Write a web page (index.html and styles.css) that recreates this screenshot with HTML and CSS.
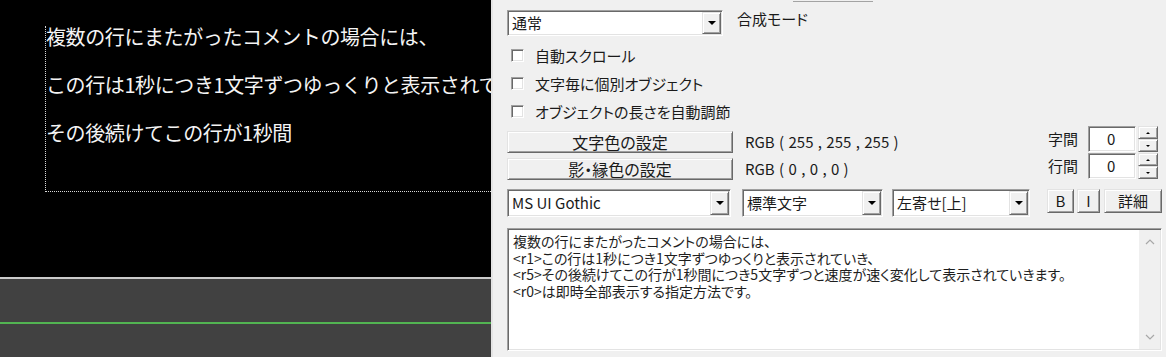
FILE: index.html
```html
<!DOCTYPE html>
<html lang="ja">
<head>
<meta charset="utf-8">
<title>テキスト</title>
<link rel="stylesheet" href="styles.css">
</head>
<body>
<div class="app">
  <div class="preview">
    <div class="canvas">
      <div class="textbox">
        <div class="line">複数の行にまたがったコメントの場合には、</div>
        <div class="line">この行は1秒につき1文字ずつゆっくりと表示されて</div>
        <div class="line">その後続けてこの行が1秒間</div>
      </div>
    </div>
    <div class="timeline"><div class="track"></div></div>
  </div>
  <div class="panel">
    <div class="stub-row"><div class="stub"></div></div>
    <div class="mode-row">
      <div class="combo mode"><div class="combo-text">通常</div><div class="combo-btn"><i class="tri"></i></div></div>
      <div class="mode-label">合成モード</div>
    </div>
    <div class="checks">
      <div class="check"><span class="cbox"></span><span class="clabel">自動スクロール</span></div>
      <div class="check"><span class="cbox"></span><span class="clabel">文字毎に個別オブジェクト</span></div>
      <div class="check"><span class="cbox"></span><span class="clabel">オブジェクトの長さを自動調節</span></div>
    </div>
    <div class="color-rows">
      <div class="color-row">
        <div class="btn">文字色の設定</div>
        <div class="rgb">RGB ( 255 , 255 , 255 )</div>
        <div class="spin">
          <div class="spin-label">字間</div>
          <div class="spin-input">0</div>
          <div class="spin-btns"><div class="spin-btn"><i class="tri-up"></i></div><div class="spin-btn"><i class="tri-down"></i></div></div>
        </div>
      </div>
      <div class="color-row">
        <div class="btn">影・縁色の設定</div>
        <div class="rgb">RGB ( 0 , 0 , 0 )</div>
        <div class="spin">
          <div class="spin-label">行間</div>
          <div class="spin-input">0</div>
          <div class="spin-btns"><div class="spin-btn"><i class="tri-up"></i></div><div class="spin-btn"><i class="tri-down"></i></div></div>
        </div>
      </div>
    </div>
    <div class="font-row">
      <div class="combo font"><div class="combo-text">MS UI Gothic</div><div class="combo-btn"><i class="tri"></i></div></div>
      <div class="combo style"><div class="combo-text">標準文字</div><div class="combo-btn"><i class="tri"></i></div></div>
      <div class="combo align"><div class="combo-text">左寄せ[上]</div><div class="combo-btn"><i class="tri"></i></div></div>
      <div class="tb tb-b">B</div>
      <div class="tb tb-i">I</div>
      <div class="tb tb-more">詳細</div>
    </div>
    <div class="memo">
      <div class="memo-text">複数の行にまたがったコメントの場合には、
&lt;r1&gt;この行は1秒につき1文字ずつゆっくりと表示されていき、
&lt;r5&gt;その後続けてこの行が1秒間につき5文字ずつと速度が速く変化して表示されていきます。
&lt;r0&gt;は即時全部表示する指定方法です。</div>
      <div class="scroll">
        <svg width="10" height="6" viewBox="0 0 10 6"><polyline points="1,5 5,1 9,5" fill="none" stroke="#a8a8a8" stroke-width="1.2"/></svg>
        <svg width="10" height="6" viewBox="0 0 10 6"><polyline points="1,1 5,5 9,1" fill="none" stroke="#a8a8a8" stroke-width="1.2"/></svg>
      </div>
    </div>
  </div>
</div>
</body>
</html>
```
FILE: styles.css
```css
html, body {
  margin: 0;
  padding: 0;
}
body {
  background: #f0f0f0;
  font-family: "Noto Sans CJK JP", "Noto Sans", sans-serif;
}
.app {
  display: flex;
  width: 1166px;
  height: 357px;
  overflow: hidden;
}

/* left preview */
.preview {
  width: 491px;
  flex: none;
  display: flex;
  flex-direction: column;
  overflow: hidden;
}
.canvas {
  height: 277px;
  flex: none;
  box-sizing: border-box;
  background: #000;
  padding: 26px 0 0 45px;
  overflow: hidden;
}
.textbox {
  width: 446px;
  height: 166px;
  box-sizing: border-box;
  border-left: 1px dotted #d8d8d8;
  border-bottom: 1px dotted #d8d8d8;
}
.line {
  height: 24px;
  line-height: 22px;
  margin-bottom: 24px;
  white-space: nowrap;
  color: #f4f4f4;
  font-size: 20px;
  letter-spacing: -0.4px;
}
.timeline {
  flex: 1;
  background: #414141;
  border-top: 2px solid #cbcbcb;
  padding-top: 43px;
}
.track {
  height: 2px;
  background: #52b452;
}

/* right panel */
.panel {
  flex: 1;
  border-left: 2px solid #e4e4e4;
  padding: 0 4px 0 14px;
  display: flex;
  flex-direction: column;
  font-size: 15px;
  color: #1a1a1a;
  font-feature-settings: "palt";
}
.stub-row {
  height: 3px;
  display: flex;
}
.stub {
  margin-left: 286px;
  width: 80px;
  height: 1px;
  border-bottom: 1px solid #a3a3a3;
}

.combo,
.cbox,
.spin-input,
.memo {
  box-sizing: border-box;
  background: #fff;
  border-top: 1px solid #a0a0a0;
  border-left: 1px solid #a0a0a0;
  border-bottom: 1px solid #fff;
  border-right: 1px solid #fff;
  box-shadow: inset 1px 1px 0 #696969, inset -1px -1px 0 #e3e3e3;
}
.combo-btn,
.btn,
.spin-btn,
.tb {
  box-sizing: border-box;
  background: #f0f0f0;
  border-top: 1px solid #e3e3e3;
  border-left: 1px solid #e3e3e3;
  border-right: 1px solid #696969;
  border-bottom: 1px solid #696969;
  box-shadow: inset 1px 1px 0 #fff, inset -1px -1px 0 #a0a0a0;
}

.mode-row {
  display: flex;
  align-items: flex-start;
  margin-top: 7px;
}
.combo {
  display: flex;
  height: 26px;
  padding: 1px;
}
.combo.mode { width: 216px; }
.combo-text {
  flex: 1;
  padding-left: 3px;
  line-height: 22px;
  white-space: nowrap;
  overflow: hidden;
}
.combo-btn {
  width: 19px;
  flex: none;
  display: flex;
  align-items: center;
  justify-content: center;
}
.tri {
  width: 0;
  height: 0;
  border-left: 4px solid transparent;
  border-right: 4px solid transparent;
  border-top: 4px solid #000;
}
.mode-label {
  margin-left: 14px;
  line-height: 17px;
}

.checks { margin-top: 5px; }
.check {
  height: 28px;
  display: flex;
  align-items: center;
}
.cbox {
  width: 13px;
  height: 13px;
  margin-left: 4px;
}
.clabel { margin-left: 11px; }

.color-rows { margin-top: 1px; }
.color-row {
  display: flex;
  align-items: flex-start;
  height: 27px;
}
.btn {
  margin-top: 5px;
  width: 226px;
  height: 22px;
  text-align: center;
  font-size: 16px;
  line-height: 20px;
}
.rgb {
  margin-left: 12px;
  margin-top: 5px;
  line-height: 22px;
  white-space: nowrap;
  word-spacing: 1px;
}
.spin {
  margin-left: auto;
  margin-right: 4px;
  display: flex;
  align-items: flex-start;
}
.spin-label {
  line-height: 26px;
  margin-right: 10px;
}
.spin-input {
  width: 48px;
  height: 26px;
  padding-left: 18px;
  line-height: 24px;
}
.spin-btns {
  margin-left: 2px;
  width: 20px;
  display: flex;
  flex-direction: column;
}
.spin-btn {
  height: 13px;
  display: flex;
  align-items: center;
  justify-content: center;
}
.tri-up {
  width: 0;
  height: 0;
  border-left: 2px solid transparent;
  border-right: 2px solid transparent;
  border-bottom: 2px solid #000;
}
.tri-down {
  width: 0;
  height: 0;
  border-left: 2px solid transparent;
  border-right: 2px solid transparent;
  border-top: 2px solid #000;
}

.font-row {
  display: flex;
  align-items: flex-start;
  margin-top: 9px;
}
.font-row .combo { height: 28px; }
.font-row .combo-text { line-height: 24px; }
.combo.font { width: 224px; }
.combo.style { width: 141px; margin-left: 11px; }
.combo.align { width: 138px; margin-left: 9px; }
.tb {
  height: 24px;
  line-height: 21px;
  text-align: center;
}
.tb-b { width: 27px; margin-left: 17px; }
.tb-i { width: 23px; margin-left: 3px; }
.tb-more { width: 58px; margin-left: 4px; }

.memo {
  margin-top: 11px;
  height: 123px;
  display: flex;
  padding: 1px;
}
.memo-text {
  flex: 1;
  padding: 3px 0 0 4px;
  font-size: 14px;
  line-height: 16.7px;
  white-space: pre;
  overflow: hidden;
  color: #1e1e1e;
}
.scroll {
  width: 21px;
  flex: none;
  background: #f0f0f0;
  display: flex;
  flex-direction: column;
  justify-content: space-between;
  align-items: center;
  padding: 9px 0 9px;
  box-sizing: border-box;
}
.scroll svg { display: block; }
```
